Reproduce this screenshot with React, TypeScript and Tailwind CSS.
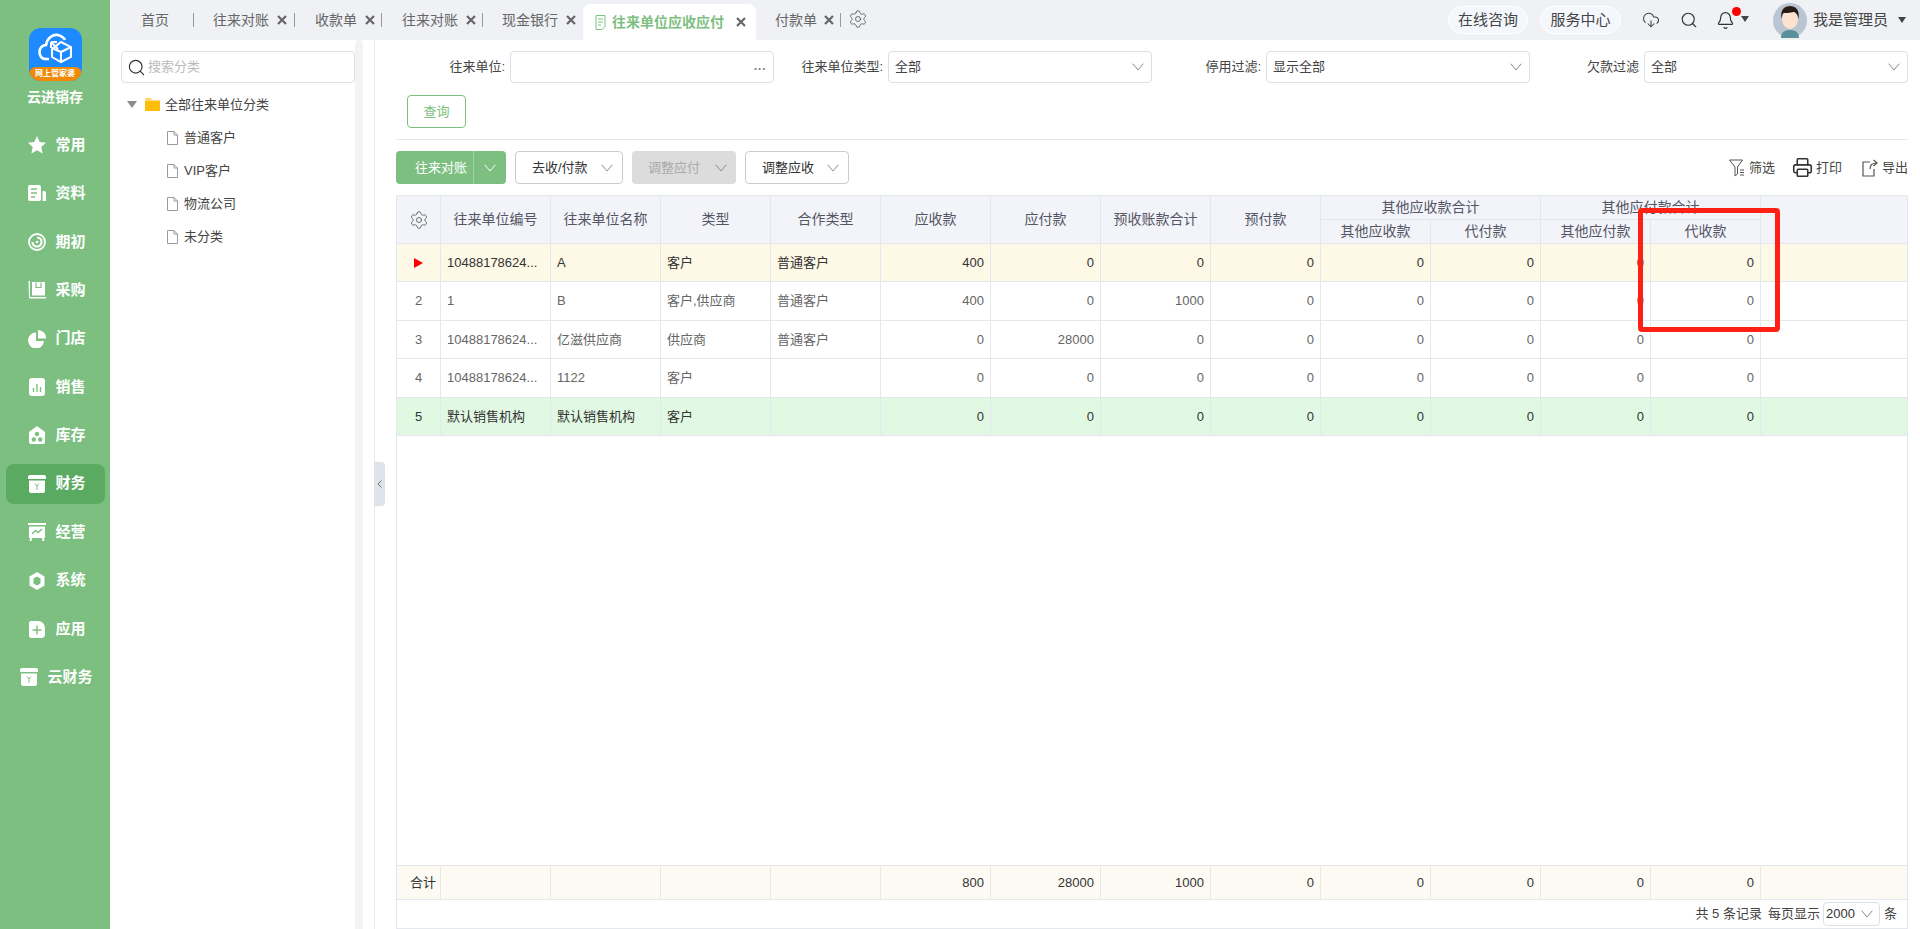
import type { ReactNode } from "react";
import { CloudDownload, Search, Bell, Settings, Printer } from "lucide-react";

const green = "#7cbf81";

function Chevron({ className = "stroke-[#8a8a8a]" }: { className?: string }) {
  return (
    <svg width="12" height="8" viewBox="0 0 12 8" fill="none" className={className} strokeWidth="1">
      <path d="M.7.7 6 7 11.3.7" />
    </svg>
  );
}

function CloseX() {
  return (
    <svg width="10" height="10" viewBox="0 0 10 10" stroke="#666" strokeWidth="2.2" className="shrink-0">
      <path d="M1 1l8 8M9 1l-8 8" />
    </svg>
  );
}

function Caret() {
  return (
    <svg width="8" height="6" viewBox="0 0 8 6" fill="#444" className="shrink-0">
      <path d="M0 0h8L4 6z" />
    </svg>
  );
}

/* sidebar icons, all white on the green bar */
const ic = "#7cbf81";
const icons: Record<string, ReactNode> = {
  star: <path d="M9 0l2.7 6 6.3.7-4.7 4.3 1.3 6.4L9 14.2l-5.6 3.2 1.3-6.4L0 6.7 6.3 6z" fill="#fff" />,
  doc: (
    <>
      <rect x="0" y="1" width="13" height="16" rx="2" fill="#fff" />
      <path d="M3 5h6M3 9h6M3 13h4" stroke={ic} strokeWidth="1.6" />
      <path d="M14.5 7H16a2 2 0 0 1 2 2v8h-3.500z" fill="#fff" />
    </>
  ),
  disc: (
    <>
      <circle cx="9" cy="9" r="8" fill="none" stroke="#fff" strokeWidth="1.800" />
      <path d="M9 4.500a4.500 4.500 0 1 1-4.500 4.500" fill="none" stroke="#fff" strokeWidth="2.200" />
      <circle cx="9" cy="9" r="1.300" fill="#fff" />
    </>
  ),
  cart: (
    <>
      <path d="M.5 0H2v16h16v1.500H2.500a2 2 0 0 1-1.500-1z" fill="#fff" />
      <path d="M4 1h13v13.500H4z" fill="#fff" />
      <path d="M8 1.500v5h5v-5" fill="none" stroke={ic} strokeWidth="1.200" />
    </>
  ),
  pie: (
    <>
      <path d="M8 2.500a8 8 0 1 0 8 8.500H8z" fill="#fff" />
      <path d="M10 0a8 8 0 0 1 8 8.500h-8z" fill="#fff" />
    </>
  ),
  bars: (
    <>
      <rect x="1" y="0" width="16" height="18" rx="3" fill="#fff" />
      <path d="M5.500 10v4M9 6v8M12.500 9v5" stroke={ic} strokeWidth="1.400" />
    </>
  ),
  house: (
    <>
      <path d="M9 0l8 6v10a2 2 0 0 1-2 2H3a2 2 0 0 1-2-2V6z" fill="#fff" />
      <circle cx="9" cy="8" r="2.200" fill={ic} />
      <circle cx="5.800" cy="13.500" r="2.200" fill={ic} />
      <circle cx="12.200" cy="13.500" r="2.200" fill={ic} />
    </>
  ),
  box: (
    <>
      <path d="M2 0h14a2 2 0 0 1 2 2v2H0V2a2 2 0 0 1 2-2z" fill="#fff" />
      <path d="M1 5.500h16V16a2 2 0 0 1-2 2H3a2 2 0 0 1-2-2z" fill="#fff" />
      <path d="M7 8.500l2 2.500 2-2.500M9 11v4" fill="none" stroke={ic} strokeWidth="1" />
    </>
  ),
  board: (
    <>
      <rect x="0" y="0" width="18" height="2" fill="#fff" />
      <path d="M1 3.500h16V15H1z" fill="#fff" />
      <path d="M4 11l3.500-3.500 2.500 2L14 6" fill="none" stroke={ic} strokeWidth="1.400" />
      <path d="M2 15l-.5 3h2l.5-3zM16 15l.5 3h-2l-.5-3z" fill="#fff" />
    </>
  ),
  hex: (
    <path
      fillRule="evenodd"
      d="M9 0l7.500 4.500v9L9 18l-7.500-4.500v-9zM9 4.500L5.500 6.500v5L9 13.500l3.500-2v-5z"
      fill="#fff"
    />
  ),
  plus: (
    <>
      <path d="M3 1h7a7 7 0 0 1 7 7v6a4 4 0 0 1-4 4H3a2 2 0 0 1-2-2V3a2 2 0 0 1 2-2z" fill="#fff" />
      <path d="M4.500 10h9M9 5.500v9" stroke={ic} strokeWidth="1.400" />
    </>
  ),
};

const menu = [
  ["常用", "star"],
  ["资料", "doc"],
  ["期初", "disc"],
  ["采购", "cart"],
  ["门店", "pie"],
  ["销售", "bars"],
  ["库存", "house"],
  ["财务", "box"],
  ["经营", "board"],
  ["系统", "hex"],
  ["应用", "plus"],
];

function Sidebar() {
  return (
    <aside className="w-[110px] shrink-0 bg-[#7cbf81] flex flex-col items-center text-white">
      <div className="mt-[28px] w-[53px] h-[53px] rounded-xl bg-[#1e8aff] overflow-hidden flex flex-col">
        <svg width="53" height="39" viewBox="0 0 53 39" fill="none" stroke="#fff" strokeWidth="2.600">
          <path d="M20 31h-3c-5 0-6.500-4-6.500-7 0-4 3-7 6.500-7 1-7 7-11 12-10 4 1 6 3 7 5" />
          <path d="M32 14l10 5v10l-10 5-9-5v-8zM32 24l10-5M32 24v10M32 24l-9-4" strokeWidth="2" />
          <path d="M22 14l7 7M22 14v6M22 14h6" strokeWidth="2" />
        </svg>
        <div className="h-[14px] bg-[#f08a05] rounded-t-[7px] text-[8px] leading-[14px] text-center text-white font-bold">
          网上管家婆
        </div>
      </div>
      <div className="mt-[7px] h-[18px] text-[14px] leading-[18px] font-bold">云进销存</div>
      <nav className="mt-[19px] flex flex-col gap-[8.4px] w-[99px]">
        {menu.map(([name, icon]) => (
          <div
            key={name}
            className={`h-10 rounded-lg flex items-center gap-[10px] pl-[22px] text-[15px] font-bold ${
              name === "财务" ? "bg-[#5aaa62]" : ""
            }`}
          >
            <svg width="18" height="18" viewBox="0 0 18 18" className="shrink-0">
              {icons[icon]}
            </svg>
            {name}
          </div>
        ))}
        <div className="h-10 flex items-center gap-[10px] pl-[14px] text-[15px] font-bold">
          <svg width="18" height="18" viewBox="0 0 18 18" className="shrink-0">
            {icons.box}
          </svg>
          云财务
        </div>
      </nav>
    </aside>
  );
}

const tabs = [
  { t: "往来对账", w: "w-[101px]", pl: "pl-[19px]" },
  { t: "收款单", w: "w-[87px]", pl: "pl-[20px]" },
  { t: "往来对账", w: "w-[101px]", pl: "pl-[20px]" },
];

function TabBar() {
  return (
    <header className="h-10 shrink-0 bg-[#eff1f5] flex items-center text-[14px] text-[#666]">
      <div className="w-[84px] h-full flex items-center pl-[31px] relative">
        首页
        <span className="ml-[24px] w-px h-[14px] bg-[#999]" />
      </div>
      {tabs.map((tab, i) => (
        <div key={i} className={`${tab.w} ${tab.pl} h-full flex items-center`}>
          {tab.t}
          <span className="ml-[8px]">
            <CloseX />
          </span>
          <span className="ml-auto w-px h-[14px] bg-[#999]" />
        </div>
      ))}
      <div className="w-[100px] h-full flex items-center pl-[19px]">
        现金银行
        <span className="ml-[8px]">
          <CloseX />
        </span>
      </div>
      <div className="w-[173px] h-9 mt-1 bg-white rounded-t-lg flex items-center pl-[12px] text-[#7cbf81] font-bold">
        <svg width="11" height="15" viewBox="0 0 11 15" fill="none" stroke="#7cbf81" className="shrink-0">
          <path d="M1 .5h9v11l-3 3H1zM3 4h5M3 7h5M3 10h3" />
        </svg>
        <span className="ml-[6px]">往来单位应收应付</span>
        <span className="ml-[12px]">
          <CloseX />
        </span>
      </div>
      <div className="w-[85px] h-full flex items-center pl-[19px]">
        付款单
        <span className="ml-[7px]">
          <CloseX />
        </span>
        <span className="ml-auto w-px h-[14px] bg-[#999]" />
      </div>
      <Settings className="ml-[7px] mb-[3px]" size={20} strokeWidth={1} color="#555" />

      <div className="ml-auto flex items-center pr-[14px]">
        <div className="w-[80px] h-[28px] rounded-full bg-[#f4f7fc] border border-white flex items-center justify-center text-[15px] text-[#444]">
          在线咨询
        </div>
        <div className="ml-[12px] w-[81px] h-[28px] rounded-full bg-[#f4f7fc] border border-white flex items-center justify-center text-[15px] text-[#444]">
          服务中心
        </div>
        <CloudDownload className="ml-[21px]" size={18} strokeWidth={1.400} color="#444" />
        <Search className="ml-[20px]" size={18} strokeWidth={1.500} color="#333" />
        <div className="ml-[18px] relative flex items-center">
          <Bell size={19} strokeWidth={1.500} color="#333" />
          <span className="absolute -top-[4px] left-[16px] w-[9px] h-[9px] rounded-full bg-[#f00]" />
          <span className="ml-[6px] mb-[2px]">
            <Caret />
          </span>
        </div>
        <svg className="ml-[24px]" width="34" height="35" viewBox="0 0 34 35">
          <ellipse cx="17" cy="17.500" rx="17" ry="17.500" fill="#b9c5d3" />
          <path d="M8 35c0-6 4-8 9-8s9 2 9 8z" fill="#5a8f9c" />
          <ellipse cx="17" cy="16" rx="8" ry="10" fill="#fde3cf" />
          <path d="M8.500 16C7 6 12 3 17 3s10 3 8.500 13c-1-5-3-7-5-7-3 1-9 1-10 1-1 1-1.500 3-2 6z" fill="#2a1c14" />
        </svg>
        <span className="ml-[6px] text-[15px] text-[#444]">我是管理员</span>
        <span className="ml-[10px]">
          <Caret />
        </span>
      </div>
    </header>
  );
}

function FileIcon() {
  return (
    <svg width="11" height="14" viewBox="0 0 11 14" fill="#fff" stroke="#9a9aa2" className="shrink-0">
      <path d="M.5.500h6.500l3.500 3.500v9.500H.5zM7 .5v3.500h3.500" />
    </svg>
  );
}

function TreePanel() {
  return (
    <div className="w-[245px] shrink-0 pl-[11px] pt-[11px] text-[13px] text-[#444]">
      <div className="h-8 border border-[#dcdfe6] rounded flex items-center pl-[5px] gap-[2px] text-[#bbb]">
        <Search size={19} strokeWidth={1.500} color="#333" />
        搜索分类
      </div>
      <div className="mt-[5px] h-[33px] flex items-center pl-[6px]">
        <svg width="10" height="7" viewBox="0 0 10 7" fill="#8b8b8b">
          <path d="M0 0h10L5 7z" />
        </svg>
        <svg className="ml-[8px]" width="15" height="13" viewBox="0 0 15 13">
          <path d="M0 1.500 1 0h5l1 2H0z" fill="#ffd75e" />
          <path d="M0 2.500h15V13H0z" fill="#ffbe0a" />
        </svg>
        <span className="ml-[5px]">全部往来单位分类</span>
      </div>
      {["普通客户", "VIP客户", "物流公司", "未分类"].map((n) => (
        <div key={n} className="h-[33px] flex items-center pl-[46px] gap-[6px]">
          <FileIcon />
          {n}
        </div>
      ))}
    </div>
  );
}

function Field({ label, value, dots }: { label: string; value?: string; dots?: boolean }) {
  return (
    <div className="flex-1 flex items-center justify-end gap-[5px]">
      <span className="text-[13px] text-[#444]">{label}</span>
      <div className="w-[264px] h-8 border border-[#dcdfe6] rounded flex items-center pl-[6px] pr-[7px] text-[13px] text-[#444]">
        {value}
        {dots ? (
          <span className="ml-auto text-[#888] text-[13px] font-bold tracking-[0.500px] leading-none mb-[4px]">...</span>
        ) : (
          <span className="ml-auto">
            <Chevron />
          </span>
        )}
      </div>
    </div>
  );
}

const colCells = Array.from({ length: 12 });

function Cols() {
  return (
    <colgroup>
      <col className="w-[44px]" />
      {colCells.map((_, i) => (
        <col key={i} className="w-[110px]" />
      ))}
      <col />
    </colgroup>
  );
}

type Row = { no: string; code: string; name: string; type: string; co: string; vals: number[]; bg: string; fg: string };

const rows: Row[] = [
  { no: "", code: "10488178624...", name: "A", type: "客户", co: "普通客户", vals: [400, 0, 0, 0, 0, 0, 0, 0], bg: "bg-[#fef8e6]", fg: "text-[#333]" },
  { no: "2", code: "1", name: "B", type: "客户,供应商", co: "普通客户", vals: [400, 0, 1000, 0, 0, 0, 0, 0], bg: "bg-white", fg: "text-[#666]" },
  { no: "3", code: "10488178624...", name: "亿滋供应商", type: "供应商", co: "普通客户", vals: [0, 28000, 0, 0, 0, 0, 0, 0], bg: "bg-white", fg: "text-[#666]" },
  { no: "4", code: "10488178624...", name: "1122", type: "客户", co: "", vals: [0, 0, 0, 0, 0, 0, 0, 0], bg: "bg-white", fg: "text-[#666]" },
  { no: "5", code: "默认销售机构", name: "默认销售机构", type: "客户", co: "", vals: [0, 0, 0, 0, 0, 0, 0, 0], bg: "bg-[#e1f9e3]", fg: "text-[#333]" },
];

const cell = "border-r border-b border-[#e4e7ee] px-[6px] truncate";
const th = "border-r border-b border-[#e4e7ee] font-normal text-center text-[14px] text-[#555566] bg-[#f2f4f9]";
const simpleHeads = ["往来单位编号", "往来单位名称", "类型", "合作类型", "应收款", "应付款", "预收账款合计", "预付款"];
const totals = [800, 28000, 1000, 0, 0, 0, 0, 0];

function Grid() {
  return (
    <div className="mt-[11px] flex-1 min-h-0 border border-[#e4e7ee] flex flex-col">
      <table className="w-full table-fixed border-separate border-spacing-0 text-[13px]">
        <Cols />
        <thead>
          <tr className="h-[24px]">
            <th rowSpan={2} className={th}>
              <Settings className="mx-auto" size={20} strokeWidth={1} color="#555" />
            </th>
            {simpleHeads.map((h) => (
              <th key={h} rowSpan={2} className={th}>
                {h}
              </th>
            ))}
            <th colSpan={2} className={th}>
              其他应收款合计
            </th>
            <th colSpan={2} className={th}>
              其他应付款合计
            </th>
            <th rowSpan={2} className="border-b border-[#e4e7ee] bg-[#f2f4f9]" />
          </tr>
          <tr className="h-[24px]">
            <th className={th}>其他应收款</th>
            <th className={th}>代付款</th>
            <th className={th}>其他应付款</th>
            <th className={th}>代收款</th>
          </tr>
        </thead>
        <tbody>
          {rows.map((r, i) => (
            <tr key={i} className={`h-[38.4px] ${r.bg} ${r.fg}`}>
              <td className={`${cell} text-center`}>
                {r.no || (
                  <svg className="mx-auto" width="9" height="10" viewBox="0 0 9 10" fill="#f00">
                    <path d="M0 0l9 5-9 5z" />
                  </svg>
                )}
              </td>
              <td className={cell}>{r.code}</td>
              <td className={cell}>{r.name}</td>
              <td className={cell}>{r.type}</td>
              <td className={cell}>{r.co}</td>
              {r.vals.map((v, j) => (
                <td key={j} className={`${cell} text-right`}>
                  {v}
                </td>
              ))}
              <td className="border-b border-[#e4e7ee]" />
            </tr>
          ))}
        </tbody>
      </table>
      <div className="flex-1" />
      <table className="w-full table-fixed border-separate border-spacing-0 text-[13px] text-[#333]">
        <Cols />
        <tbody>
          <tr className="h-[35px] bg-[#fdfaf3]">
            <td className="border-y border-r border-[#e4e7ee] text-right pr-[4px]">合计</td>
            {["", "", "", ""].map((_, i) => (
              <td key={i} className="border-y border-r border-[#e8e8e4]" />
            ))}
            {totals.map((v, i) => (
              <td key={i} className="border-y border-r border-[#e8e8e4] text-right px-[6px]">
                {v}
              </td>
            ))}
            <td className="border-y border-[#e4e7ee]" />
          </tr>
        </tbody>
      </table>
      <div className="h-[28px] shrink-0 flex items-center justify-end pr-[10px] text-[13px] text-[#444]">
        <span>共 5 条记录</span>
        <span className="ml-[6px]">每页显示</span>
        <div className="ml-[3px] w-[57px] h-6 border border-[#dcdfe6] rounded flex items-center justify-between pl-[2px] pr-[6px] text-[#333]">
          2000
          <Chevron />
        </div>
        <span className="ml-[4px]">条</span>
      </div>
    </div>
  );
}

function ToolButton({ label, disabled }: { label: string; disabled?: boolean }) {
  return (
    <div
      className={`h-[33px] flex items-center justify-between pl-4 pr-[9px] rounded-sm text-[13px] ${
        disabled ? "bg-[#dcdcdc] text-[#aaa]" : "border border-[#c9ccd2] text-[#333]"
      }`}
    >
      {label}
      <Chevron />
    </div>
  );
}

function Main() {
  return (
    <main className="relative flex-1 min-w-0 flex flex-col pl-[21px] pr-[12px] pt-[11px]">
      <div className="flex items-center">
        <Field label="往来单位:" dots />
        <Field label="往来单位类型:" value="全部" />
        <Field label="停用过滤:" value="显示全部" />
        <Field label="欠款过滤" value="全部" />
      </div>
      <div className="mt-3 ml-[11px] w-[59px] h-[33px] border border-[#7cbf81] rounded-sm text-[13px] flex items-center justify-center" style={{ color: green }}>
        查询
      </div>
      <div className="mt-[11px] h-px bg-[#e8e8e8] shrink-0" />
      <div className="mt-[11px] flex items-center h-[33px] text-[13px]">
        <div className="w-[110px] h-full bg-[#7cbf81] rounded-sm flex items-center text-white">
          <span className="w-[78px] pl-[19px] h-full flex items-center border-r border-[#a5d4a9]">往来对账</span>
          <span className="flex-1 flex justify-center">
            <Chevron className="stroke-white" />
          </span>
        </div>
        <div className="ml-[9px] w-[108px]">
          <ToolButton label="去收/付款" />
        </div>
        <div className="ml-[9px] w-[104px]">
          <ToolButton label="调整应付" disabled />
        </div>
        <div className="ml-[9px] w-[104px]">
          <ToolButton label="调整应收" />
        </div>
        <div className="ml-auto flex items-center text-[13px] text-[#444]">
          <svg width="16" height="18" viewBox="0 0 16 18" fill="none" stroke="#555" strokeWidth="1">
            <path d="M.5 1h13L8.500 8v7l-2.500 2V8zM11 11h4M11 13.500h4M11 16h4" />
          </svg>
          <span className="ml-[4px]">筛选</span>
          <Printer className="ml-[17px]" size={21} strokeWidth={1.800} color="#333" />
          <span className="ml-[3px]">打印</span>
          <svg className="ml-[20px]" width="16" height="18" viewBox="0 0 16 18" fill="none" stroke="#555" strokeWidth="1.200">
            <path d="M8 3H1v14h11v-7M8 10c0-4 2-6 7-6M11.500 1L15 4l-3.500 3" />
          </svg>
          <span className="ml-[4px]">导出</span>
        </div>
      </div>
      <Grid />
      {/* red marker drawn over the table */}
      <div className="absolute left-[1263px] top-[168px] w-[142px] h-[124px] border-[5px] border-[#ff2015] rounded-[4px] pointer-events-none" />
      <div className="absolute -left-px top-[422px] w-[11px] h-[44px] bg-[#dfe3ea] rounded-r-sm flex items-center justify-center">
        <svg width="5" height="8" viewBox="0 0 5 8" fill="none" stroke="#777">
          <path d="M4.500.5 1 4l3.500 3.500" />
        </svg>
      </div>
    </main>
  );
}

export default function App() {
  return (
    <div className="w-[1920px] h-[929px] overflow-hidden flex bg-white font-['Liberation_Sans','Noto_Sans_CJK_SC',sans-serif]">
      <Sidebar />
      <div className="flex-1 min-w-0 flex flex-col">
        <TabBar />
        <div className="flex-1 min-h-0 flex">
          <TreePanel />
          <div className="w-2 shrink-0 bg-[#f3f3f3] rounded-t" />
          <div className="w-[11px] shrink-0" />
          <div className="w-px shrink-0 bg-[#e6e8f0]" />
          <Main />
        </div>
      </div>
    </div>
  );
}
